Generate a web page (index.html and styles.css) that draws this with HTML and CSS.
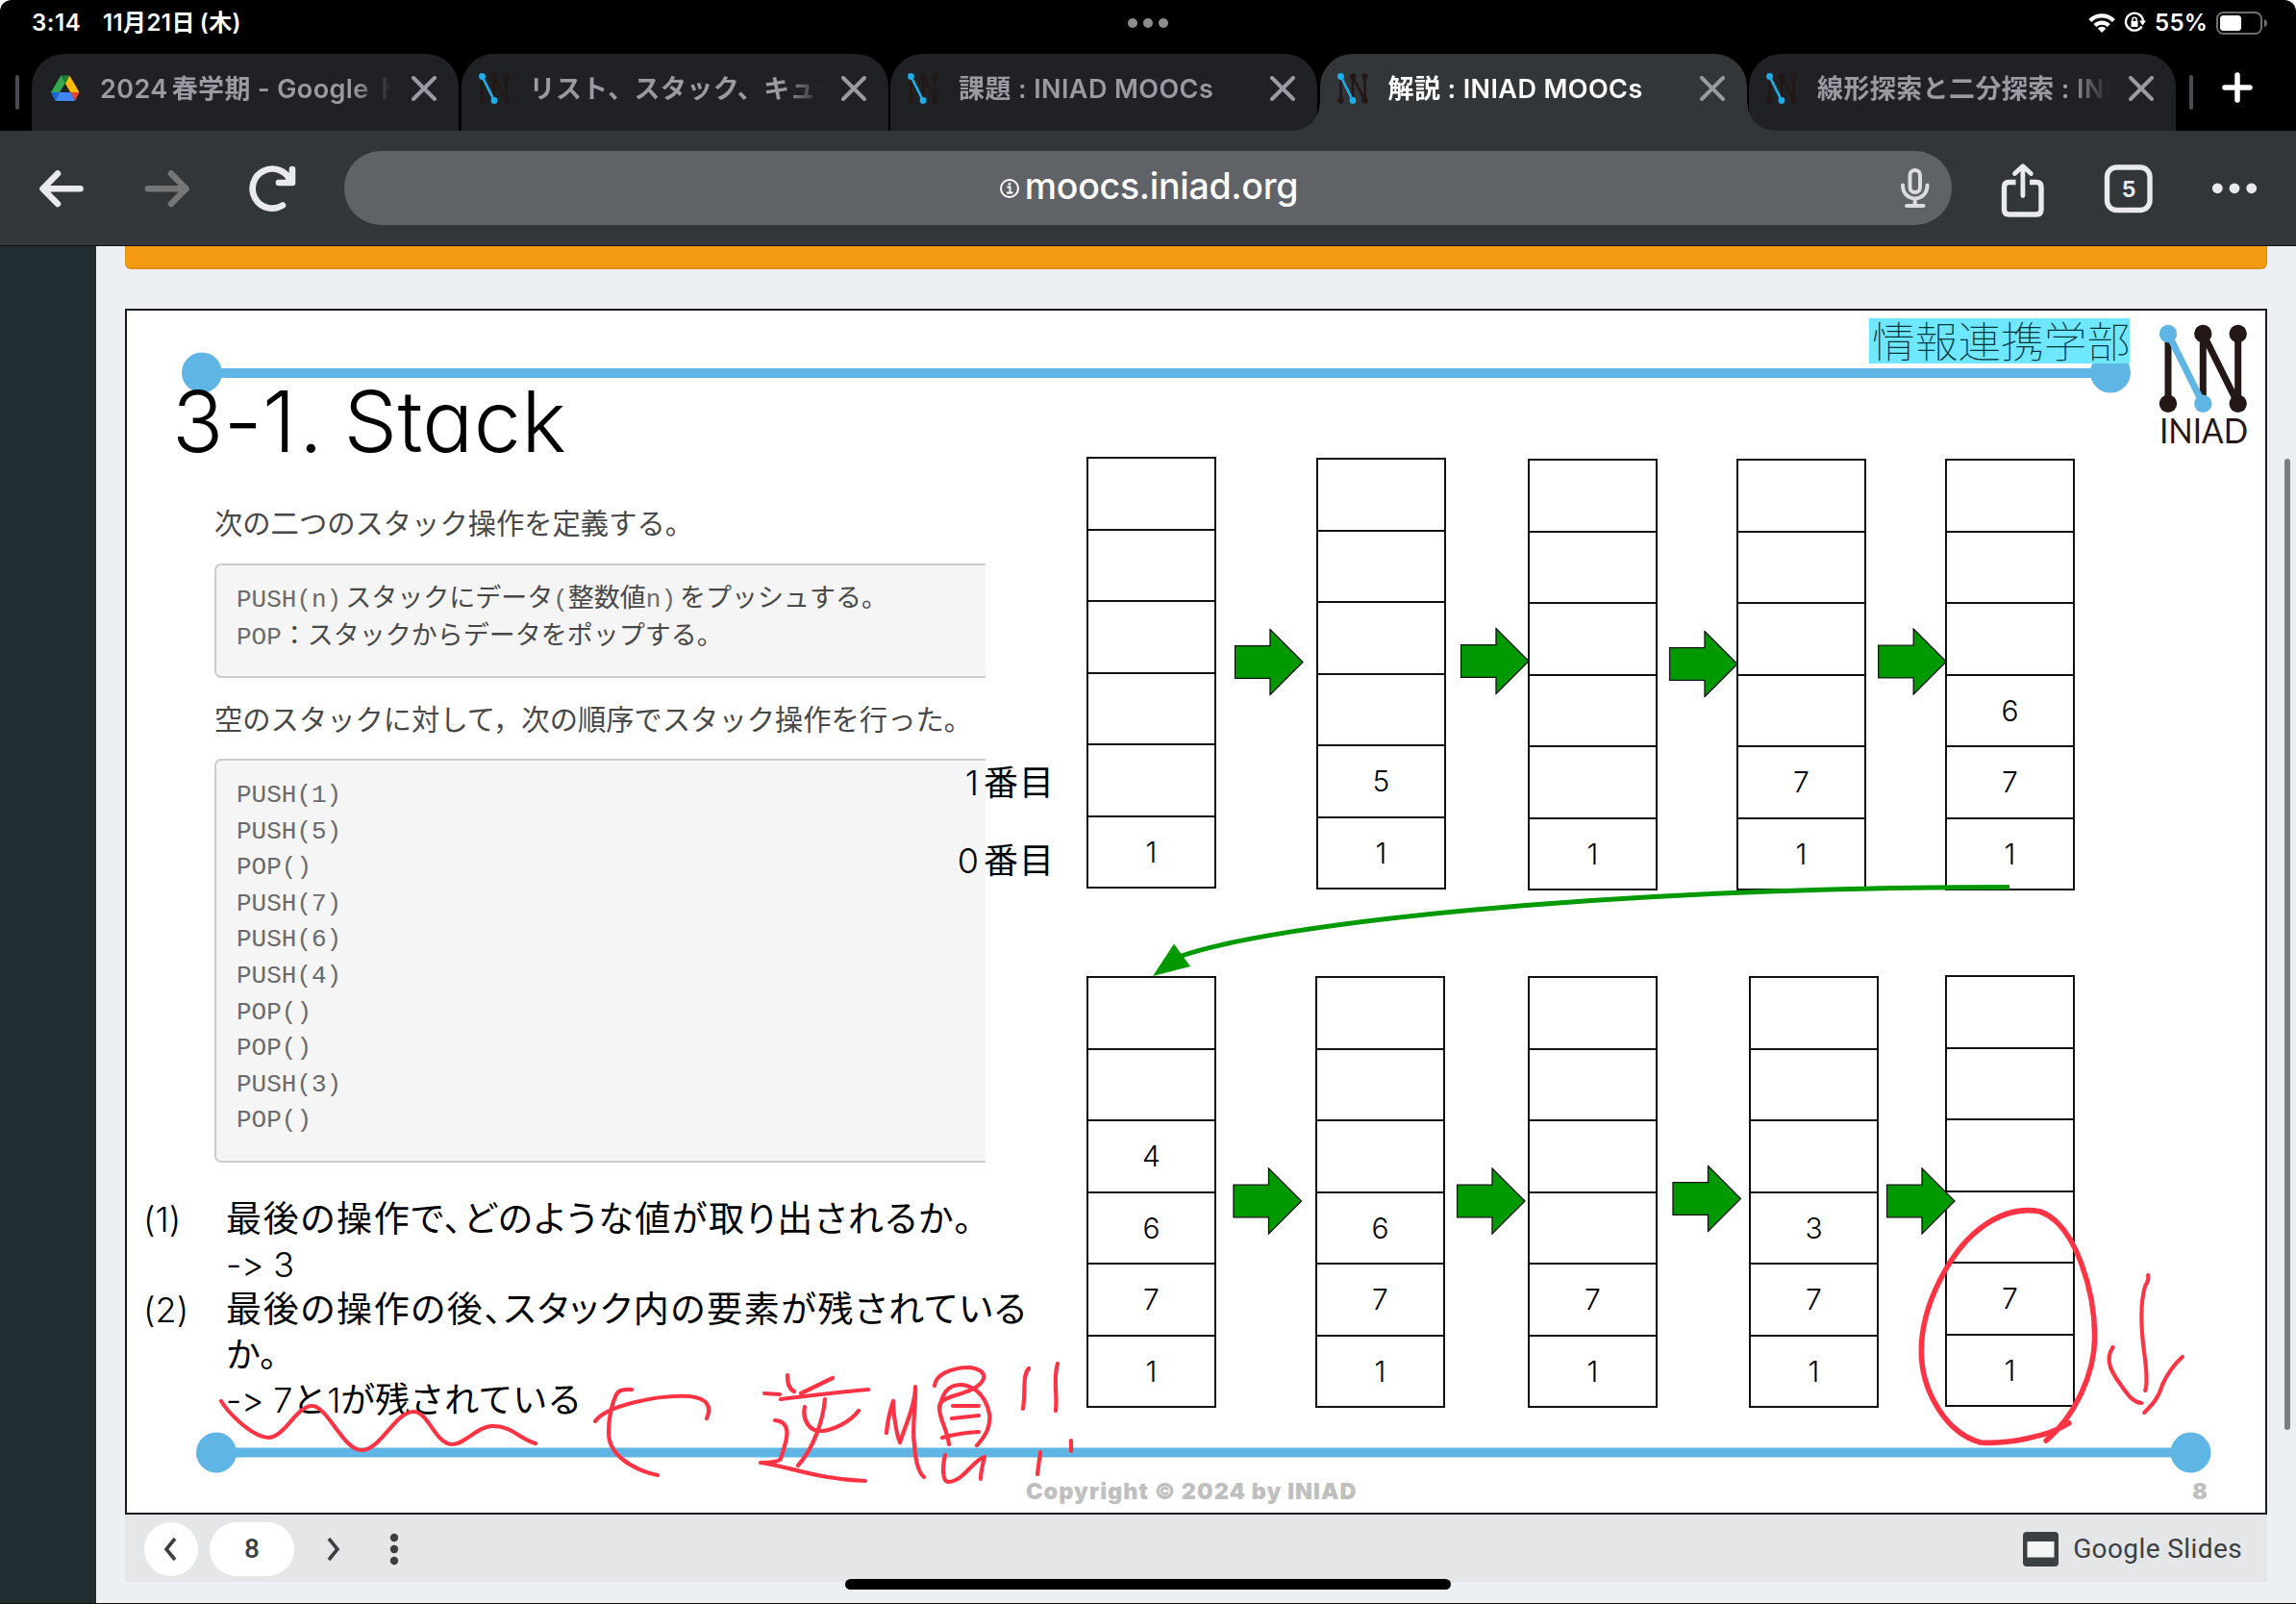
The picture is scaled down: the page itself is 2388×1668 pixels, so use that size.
FILE: index.html
```html
<!DOCTYPE html>
<html lang="ja">
<head>
<meta charset="utf-8">
<title>解説 : INIAD MOOCs</title>
<link rel="stylesheet" href="styles.css">
</head>
<body>
<svg class="defs" width="0" height="0">
  <symbol id="close" viewBox="0 0 26 26"><path d="M2 2L24 24M24 2L2 24" fill="none" stroke="currentColor" stroke-width="4" stroke-linecap="round"/></symbol>
  <symbol id="nn" viewBox="0 0 32 32">
    <g fill="none" stroke="#231815" stroke-width="2.6"><path d="M3.500 4V28M16 4V28M28.500 4V28M16 4L28.500 28"/></g>
    <g fill="#231815"><circle cx="3.500" cy="28.500" r="3.200"/><circle cx="16" cy="3.500" r="3.200"/><circle cx="28.500" cy="3.500" r="3.200"/><circle cx="28.500" cy="28.500" r="3.200"/></g>
    <path d="M3.500 3.500L16 28.500" stroke="#1eaee8" stroke-width="2.600"/><circle cx="3.500" cy="3.500" r="3.400" fill="#1eaee8"/><circle cx="16" cy="28.500" r="3.400" fill="#1eaee8"/>
  </symbol>
  <symbol id="block-arrow" viewBox="0 0 73 70"><path d="M1 18.200H37.500V1L71.500 35L37.500 69V51.800H1Z" fill="#009a00" stroke="#111" stroke-width="1.300"/></symbol>
</svg>

<div class="screen">
  <header class="status">
    <span class="time">3:14</span>
    <span class="date">11月21日<span class="weekday">(木)</span></span>
    <span class="multitask"><i></i><i></i><i></i></span>
    <span class="battery-pct">55%</span>
    <svg class="status-icons" viewBox="2170 8 64 32" width="64" height="32">
      <g fill="none" stroke="#fff" stroke-width="4.200"><path d="M2173.800 21.500A17.500 17.500 0 0 1 2198.400 21.500"/><path d="M2178.900 26.500A10.300 10.300 0 0 1 2193.300 26.500"/></g>
      <path d="M2186.100 34L2181.800 29.600A6.200 6.200 0 0 1 2190.400 29.600Z" fill="#fff"/>
      <path d="M2227.600 27.500A9 9 0 1 1 2229 22" fill="none" stroke="#fff" stroke-width="2.400"/>
      <path d="M2225 21.500H2232L2228.500 26.500Z" fill="#fff"/>
      <path d="M2216.500 22H2223.500V28H2216.500Z" fill="#fff"/><path d="M2217.800 22.500V20.500A2.200 2.200 0 0 1 2222.200 20.500V22.500" fill="none" stroke="#fff" stroke-width="1.500"/>
    </svg>
    <svg class="battery" viewBox="0 0 54 24" width="54" height="24">
      <rect x="1" y="1" width="46" height="22" rx="6.500" fill="none" stroke="#6f6f6f" stroke-width="2"/>
      <rect x="4" y="4" width="22" height="16" rx="3.500" fill="#fff"/>
      <path d="M50 8Q53 9 53 12T50 16Z" fill="#6f6f6f"/>
    </svg>
  </header>

  <nav class="tabs">
    <span class="sep"></span>
    <div class="tab first">
      <svg class="drive" viewBox="52 78 32 28" width="32" height="28">
        <path d="M52.900 96L63.200 78.700H72.500L62 96Z" fill="#34a853"/><path d="M63.200 78.700H72.500L67.900 87Z" fill="#188038"/>
        <path d="M67.900 87L72.500 78.700L82.500 96H73.300Z" fill="#fbbc04"/><path d="M73.300 96H82.500L78 105L73 96Z" fill="#ea4335"/>
        <path d="M52.900 96H61.800L57.500 105Z" fill="#1967d2"/><path d="M61.800 96H73.300L78 105H57.500Z" fill="#4285f4"/>
      </svg>
      <span class="tab-title t1">2024<span class="term">春学期</span> - Google ド</span>
      <svg class="x"><use href="#close"/></svg>
    </div>
    <div class="tab"><svg class="nn"><use href="#nn"/></svg><span class="tab-title">リスト、スタック、キュー</span><svg class="x"><use href="#close"/></svg></div>
    <div class="tab"><svg class="nn"><use href="#nn"/></svg><span class="tab-title">課題 : INIAD MOOCs</span><svg class="x"><use href="#close"/></svg></div>
    <div class="tab active"><svg class="nn"><use href="#nn"/></svg><span class="tab-title">解説 : INIAD MOOCs</span><svg class="x"><use href="#close"/></svg></div>
    <div class="tab"><svg class="nn"><use href="#nn"/></svg><span class="tab-title">線形探索と二分探索 : INIA</span><svg class="x"><use href="#close"/></svg></div>
    <span class="sep end"></span>
    <svg class="plus" viewBox="0 0 32 32" width="32" height="32"><path d="M16 3V29M3 16H29" stroke="#fff" stroke-width="5.500" stroke-linecap="round"/></svg>
  </nav>

  <div class="toolbar">
    <svg class="nav-icons" viewBox="30 166 290 60" width="290" height="60">
      <g fill="none" stroke-width="6.600" stroke-linecap="round" stroke-linejoin="round">
        <path d="M83.500 196.300H45M60 180.500L44.500 196.300L60 212" stroke="#e8eaed"/>
        <path d="M154 196.300H192.500M178 180.500L193.500 196.300L178 212" stroke="#757678"/>
        <path d="M294 213.500A20.500 20.500 0 1 1 302 188M304 176V190H290" stroke="#e8eaed"/>
      </g>
    </svg>
    <div class="omnibox">
      <svg class="info" viewBox="0 0 22 22" width="22" height="22"><circle cx="11" cy="11" r="9" fill="none" stroke="#fff" stroke-width="2"/><path d="M8.500 9.500H11.500V15.500M8 15.500H14.500" fill="none" stroke="#fff" stroke-width="1.800"/><circle cx="11" cy="6.300" r="1.400" fill="#fff"/></svg>
      <span class="url">moocs.iniad.org</span>
      <svg class="mic" viewBox="1974 172 36 48" width="36" height="48"><g fill="none" stroke="#dadce0" stroke-width="4" stroke-linecap="round"><rect x="1986.500" y="177" width="10.500" height="23" rx="5.250"/><path d="M1979 192.500C1979 211 2004.500 211 2004.500 192.500M1991.700 207V213M1983 214H2000.500"/></g></svg>
    </div>
    <svg class="actions" viewBox="2075 165 280 66" width="280" height="66">
      <g fill="none" stroke="#e8eaed" stroke-width="5.400" stroke-linecap="round" stroke-linejoin="round">
        <path d="M2096.500 189.500H2089.500Q2084.500 189.500 2084.500 194.500V218Q2084.500 223 2089.500 223H2118Q2123 223 2123 218V194.500Q2123 189.500 2118 189.500H2111" stroke-linecap="butt"/>
        <path d="M2103.900 203.500V175M2095.500 180.500L2103.900 172.700L2112.300 180.500" stroke-width="4.800"/>
        <rect x="2191.500" y="174" width="44.500" height="44.500" rx="10"/>
      </g>
      <g fill="#e8eaed"><circle cx="2306.300" cy="195.800" r="5.400"/><circle cx="2324" cy="195.800" r="5.400"/><circle cx="2341.700" cy="195.800" r="5.400"/></g>
      <text class="tab-count" x="2214" y="204.500" text-anchor="middle">5</text>
    </svg>
  </div>

  <div class="page">
    <aside class="sidebar"></aside>
    <main class="content">
      <div class="callout"></div>
      <section class="slide">
        <svg class="layer" viewBox="132 323 2224 1250">
          <g fill="#5fb6e4"><circle cx="210" cy="387.500" r="21"/><circle cx="2195" cy="387.500" r="21"/><rect x="210" y="383" width="1985" height="10"/>
          <circle cx="225" cy="1510.500" r="21"/><circle cx="2278.500" cy="1510.500" r="21"/><rect x="225" y="1505.500" width="2054" height="10"/></g>
          <g stroke="#231815" stroke-width="7"><path d="M2255 347V420M2291.300 347V420M2327.700 347V420M2291.300 347L2327.700 420"/></g>
          <g fill="#231815"><circle cx="2255" cy="419.700" r="9.200"/><circle cx="2291.300" cy="347" r="9.200"/><circle cx="2327.700" cy="347" r="9.200"/><circle cx="2327.700" cy="419.700" r="9.200"/></g>
          <path d="M2255 347L2291.300 420" stroke="#5fb6e4" stroke-width="7"/><circle cx="2255" cy="347" r="9.200" fill="#5fb6e4"/><circle cx="2291.300" cy="419.700" r="9.200" fill="#5fb6e4"/>
          <text class="logo-text" x="2246" y="460.500" textLength="92" lengthAdjust="spacingAndGlyphs">INIAD</text>
        </svg>
        <div class="faculty">情報連携学部</div>
        <h1>3-1<span class="dot">.</span> Stack</h1>

        <div class="problem">
          <p class="lead">次の二つのスタック操作を定義する。</p>
          <pre class="code spec"><span>PUSH(n)<b>スタックにデータ</b>(<b class="tight">整数値</b>n)<b>をプッシュする。</b></span>
<span>POP<b class="tight">：スタックからデータをポップする。</b></span></pre>
          <p class="lead second">空のスタックに対して，次の順序でスタック操作を行った。</p>
          <pre class="code ops">PUSH(1)
PUSH(5)
POP()
PUSH(7)
PUSH(6)
PUSH(4)
POP()
POP()
PUSH(3)
POP()</pre>
        </div>
        <div class="index one"><span>1</span>番目</div>
        <div class="index zero"><span>0</span>番目</div>

        <ol class="answers">
          <li><span class="no">(1)</span><div><p class="q1">最後の操作で、どのような値が取り出されるか。</p><p><span class="lt">-&gt; 3</span></p></div></li>
          <li><span class="no">(2)</span><div><p class="q2">最後の操作の後、スタック内の要素が残されている</p><p>か。</p><p><span class="lt">-&gt; 7</span>と<span class="lt">1</span>が残されている</p></div></li>
        </ol>

        <div class="stack a1"><i></i><i></i><i></i><i></i><i></i><i>1</i></div>
        <div class="stack a2"><i></i><i></i><i></i><i></i><i>5</i><i>1</i></div>
        <div class="stack a3"><i></i><i></i><i></i><i></i><i></i><i>1</i></div>
        <div class="stack a4"><i></i><i></i><i></i><i></i><i>7</i><i>1</i></div>
        <div class="stack a5"><i></i><i></i><i></i><i>6</i><i>7</i><i>1</i></div>
        <div class="stack b1"><i></i><i></i><i>4</i><i>6</i><i>7</i><i>1</i></div>
        <div class="stack b2"><i></i><i></i><i></i><i>6</i><i>7</i><i>1</i></div>
        <div class="stack b3"><i></i><i></i><i></i><i></i><i>7</i><i>1</i></div>
        <div class="stack b4"><i></i><i></i><i></i><i>3</i><i>7</i><i>1</i></div>
        <div class="stack b5"><i></i><i></i><i></i><i></i><i>7</i><i>1</i></div>

        <div class="copyright">Copyright © 2024 by INIAD</div>
        <div class="page-no">8</div>

        <svg class="layer" viewBox="132 323 2224 1250">
          <use href="#block-arrow" x="1283.500" y="653.500" width="73" height="70"/>
          <use href="#block-arrow" x="1518.500" y="652.500" width="73" height="70"/>
          <use href="#block-arrow" x="1735.500" y="655.500" width="73" height="70"/>
          <use href="#block-arrow" x="1952.700" y="653" width="73" height="70"/>
          <use href="#block-arrow" x="1282" y="1214" width="73" height="70"/>
          <use href="#block-arrow" x="1514.500" y="1214" width="73" height="70"/>
          <use href="#block-arrow" x="1739" y="1211.500" width="73" height="70"/>
          <use href="#block-arrow" x="1961.500" y="1214" width="73" height="70"/>
          <path d="M2090 922.600C1650 923 1320 962 1229 994" fill="none" stroke="#009a00" stroke-width="5"/>
          <path d="M1199 1015L1221 981.500L1238 1005Z" fill="#009a00"/>
          <g class="ink">
            <path d="M230 1457C238 1470 262 1494 279 1495C296 1495 309 1461 325 1462C341 1463 357 1508 376 1508C396 1508 411 1468 430 1468C446 1468 452 1501 470 1502C484 1502 497 1482 514 1483C532 1483 540 1496 557 1501"/>
            <path d="M657 1445Q644 1444 641 1450C635 1463 633 1474 633 1490C633 1512 656 1528 684 1534"/>
            <path d="M619 1478C630 1462 684 1450 717 1452C737 1454 740 1464 735 1475"/>
            <path d="M819 1430C819 1438 820 1444 826 1447M866 1433L833 1449M795 1449L811 1450M812 1455C845 1451 870 1448 903 1445M858 1455C856 1478 846 1506 830 1524M837 1463C834 1476 842 1489 854 1488C866 1488 885 1478 893 1467M806 1477C828 1479 815 1505 812 1517Q809 1521 791 1521C822 1525 848 1538 900 1540"/>
            <path d="M922 1490C923 1478 926 1466 929 1457C929 1468 932 1491 936 1500C942 1482 952 1460 952 1442C953 1462 948 1485 951 1502C952 1518 955 1531 961 1536"/>
            <path d="M972 1441C973 1430 988 1422 1009 1422C1034 1426 1023 1443 1000 1449C983 1454 976 1457 977 1465C978 1478 985 1486 987 1502M977 1465C981 1442 991 1440 1001 1440C1018 1443 1026 1456 1029 1470C1031 1485 1024 1495 1016 1503M991 1462H1018M990 1475L1018 1472M980 1495Q998 1490 1018 1489M983 1513C980 1526 980 1540 986 1541C1002 1541 1012 1518 1024 1515C1022 1524 1020 1530 1020 1538"/>
            <path d="M1070 1423C1063 1431 1067 1446 1064 1465M1100 1418C1095 1435 1100 1448 1098 1467M1082 1510L1079 1533M1114 1498V1509"/>
            <g transform="translate(15.100 0) scale(.9911 1)">
              <path class="ring" d="M2156 1480C2134 1494 2090 1502 2063 1500C2026 1490 2001 1445 2001 1405C2001 1356 2032 1301 2062 1278C2088 1258 2111 1257 2126 1260C2164 1274 2183 1345 2183 1390C2183 1430 2161 1474 2132 1498"/>
              <path d="M2239 1326Q2240 1332 2236 1337C2230 1357 2232 1385 2235 1407C2238 1429 2238 1440 2236 1446M2202 1401C2192 1416 2203 1430 2211 1441C2218 1451 2223 1458 2232 1459M2275 1411C2266 1419 2260 1427 2254 1440C2250 1454 2243 1461 2235 1469"/>
            </g>
          </g>
        </svg>
      </section>
      <footer class="player">
        <span class="btn"><svg viewBox="0 0 24 28" width="24" height="28"><path d="M16 3L7 14L16 25" class="chev"/></svg></span>
        <span class="pill">8</span>
        <svg class="next" viewBox="0 0 24 28" width="24" height="28"><path d="M8 3L17 14L8 25" class="chev"/></svg>
        <svg class="more" viewBox="0 0 10 36" width="10" height="36"><g fill="#3c4043"><circle cx="5" cy="6" r="4.200"/><circle cx="5" cy="18" r="4.200"/><circle cx="5" cy="30" r="4.200"/></g></svg>
        <svg class="slides-icon" viewBox="0 0 37 36" width="37" height="36"><rect width="37" height="36" rx="4" fill="#3c4043"/><rect x="4.500" y="10" width="28" height="16.500" fill="#f4f5f6"/></svg>
        <span class="brand">Google Slides</span>
      </footer>
    </main>
    <div class="scrollbar"></div>
  </div>
  <div class="home"></div>
</div>
</body>
</html>
```
FILE: styles.css
```css
* { box-sizing: border-box; }
body { margin: 0; background: #fff; font-family: Inter, "Noto Sans CJK JP", sans-serif; }
p, h1, pre, ol { margin: 0; padding: 0; }
i { font-style: normal; }
.defs { position: absolute; }
.screen { position: relative; width: 2388px; height: 1668px; overflow: hidden; border-radius: 12px 12px 0 0; background: #000; display: flex; flex-direction: column; }

/* status bar */
.status { position: relative; height: 56px; display: flex; align-items: flex-start; padding: 9px 32px 0 33px; color: #fff; font-size: 24px; font-weight: 600; line-height: 30px; }
.time { width: 74px; letter-spacing: .6px; }
.date { letter-spacing: .4px; white-space: nowrap; }
.weekday { margin-left: 5px; }
.multitask { position: absolute; left: 1173px; top: 19px; display: flex; gap: 6px; }
.multitask i { width: 10px; height: 10px; border-radius: 50%; background: #8c8c8c; }
.status-icons { order: 1; margin-left: auto; margin-top: -1px; }
.battery-pct { order: 2; margin-left: 7px; width: 64px; white-space: nowrap; letter-spacing: .3px; }
.battery { order: 3; margin-top: 3px; margin-right: -3px; }

/* tab strip */
.tabs { height: 80px; display: flex; align-items: center; position: relative; }
.sep { width: 4px; height: 36px; border-radius: 2px; background: #4c4b54; margin-left: 16px; }
.sep.end { margin-left: 11px; }
.plus { margin-left: 30px; margin-top: -10px; }
.tab { position: relative; width: 444px; height: 80px; margin-right: 2.5px; flex: none; border-radius: 34px 34px 0 0; background: #202124; color: #9a9aa3; display: flex; align-items: center; padding: 0 23px 8px 18px; }
.tab.first { margin-left: 13px; }
.tab-title { width: 304px; margin-left: 21px; overflow: hidden; white-space: nowrap; font-size: 27px; font-weight: 600; line-height: 40px; letter-spacing: .4px; margin-top: 1px; -webkit-mask-image: linear-gradient(90deg, #000 87%, transparent 100%); mask-image: linear-gradient(90deg, #000 87%, transparent 100%); }
.tab-title.t1 { margin-left: 20px; }
.term { margin-left: 4px; }
.nn { width: 32px; height: 32px; flex: none; }
.drive { flex: none; margin-left: 1px; }
.x { width: 26px; height: 26px; margin-left: auto; flex: none; }
.tab.active { background: #323639; color: #fff; z-index: 1; }
.tab.active .x { color: #9a9aa3; }
.tab.active::before, .tab.active::after { content: ""; position: absolute; bottom: 0; width: 28px; height: 28px; }
.tab.active::before { left: -28px; background: radial-gradient(circle at 0 0, transparent 27px, #323639 28px); }
.tab.active::after { right: -28px; background: radial-gradient(circle at 100% 0, transparent 27px, #323639 28px); }

/* toolbar */
.toolbar { height: 120px; background: #323639; border-bottom: 1px solid #111; display: flex; align-items: center; flex: none; padding-left: 30px; }
.omnibox { position: relative; width: 1672px; height: 77px; border-radius: 38px; background: #5f6367; margin-left: 38px; display: flex; align-items: center; justify-content: center; }
.info { margin-right: 5px; margin-left: 1px; }
.url { color: #fff; font-size: 37.500px; font-weight: 500; line-height: 50px; margin-top: -4px; letter-spacing: -.3px; }
.mic { position: absolute; right: 20px; top: 15px; }
.actions { margin-left: 45px; margin-top: 4px; }
.tab-count { font: 700 23px Inter, sans-serif; fill: #e8eaed; }

/* page */
.page { position: relative; flex: 1; display: flex; background: #ecf0f5; border-bottom: 1px solid #111; }
.sidebar { width: 100px; background: #222d32; }
.content { width: 2228px; margin-left: 30px; display: flex; flex-direction: column; }
.callout { height: 24px; background: #f39c12; border: solid #e08e0b; border-width: 0 1px 2px; border-radius: 0 0 6px 6px; margin-bottom: 41px; flex: none; }
.scrollbar { position: absolute; right: 6px; top: 221px; width: 6px; height: 1010px; border-radius: 3px; background: #7c7e82; }
.home { position: absolute; left: 879px; top: 1642px; width: 630px; height: 11px; border-radius: 6px; background: #000; }

/* slide canvas */
.slide { position: relative; height: 1254px; flex: none; background: #fff; border: 2px solid #1c1c1e; color: #000; font-family: Inter, "Noto Sans CJK JP", sans-serif; font-feature-settings: "calt" 0, "cv11" 1; }
.layer { position: absolute; left: 0; top: 0; width: 2224px; height: 1250px; }
.logo-text { font: 400 36px Lato, sans-serif; fill: #231815; }
.faculty { position: absolute; left: 1812px; top: 8px; width: 271px; height: 47px; background: #6fe8ff; color: #06343c; padding-left: 3px; font: 100 44.700px/44px "Noto Sans CJK JP", sans-serif; white-space: nowrap; }
h1 { position: absolute; left: 47px; top: 60px; font-size: 88px; line-height: 110px; font-weight: 300; white-space: nowrap; letter-spacing: .4px; }
.dot { margin-left: 3px; margin-right: -4px; }
.problem { position: absolute; left: 91px; top: 198px; width: 802px; font-family: "Noto Sans CJK JP", sans-serif; color: #484848; }
.lead { font-size: 29.300px; line-height: 42px; white-space: nowrap; }
.second { margin-top: 20px; }
.code { margin-top: 22px; border: 2px solid #ccc; border-right: 0; border-radius: 7px 0 0 7px; background: #f5f5f5; padding-left: 21px; font: 26px/37.600px "Liberation Mono", monospace; color: #6a6a6a; }
.code b { font: 400 27px/30px "Noto Sans CJK JP", sans-serif; color: #484848; margin-left: 4px; }
.code b.tight { margin-left: 0; }
.spec { margin-top: 23px; height: 119px; padding-top: 17px; }
.ops { height: 420px; padding-top: 18px; }
.index { position: absolute; font-size: 36px; line-height: 50px; letter-spacing: 1px; white-space: nowrap; right: 1259px; font-weight: 400; }
.index span { font-weight: 300; letter-spacing: 0; margin-right: 5px; }
.one { top: 466px; }
.zero { top: 547px; }
.answers { position: absolute; left: 17px; top: 922px; list-style: none; font-size: 36px; line-height: 46.900px; font-weight: 400; }
.answers li { display: flex; }
.answers p { white-space: nowrap; height: 46.900px; }
.no { width: 86px; font-weight: 300; }
.lt { font-weight: 300; letter-spacing: -.2px; }
.answers .q1, .answers .q2 { font-feature-settings: "palt"; font-size: 37px; letter-spacing: 1.750px; }

.stack { position: absolute; width: 135px; height: 449px; border: solid #111; border-width: 0 2px 2px; display: grid; grid-template-rows: repeat(6, 1fr); font-size: 30px; font-weight: 300; }
.stack i { display: flex; align-items: center; justify-content: center; border-top: 2px solid #111; }
.a1 { left: 998px; top: 152px; }
.a2 { left: 1237px; top: 153px; }
.a3 { left: 1457px; top: 154px; }
.a4 { left: 1674px; top: 154px; }
.a5 { left: 1891px; top: 154px; }
.b1 { left: 998px; top: 692px; }
.b2 { left: 1236px; top: 692px; }
.b3 { left: 1457px; top: 692px; }
.b4 { left: 1687px; top: 692px; }
.b5 { left: 1891px; top: 691px; }
.copyright, .page-no { position: absolute; top: 1213px; font: 900 23.500px/30px Inter, sans-serif; color: #bfbfbf; white-space: nowrap; }
.copyright { left: 935px; letter-spacing: 1px; }
.page-no { left: 2148px; }
.ink { fill: none; stroke: #ff3344; stroke-width: 4.200; stroke-linecap: round; stroke-linejoin: round; }
.ink .ring { stroke-width: 5.600; }

/* player bar */
.player { height: 70px; flex: none; background: #e4e6e8; display: flex; align-items: center; padding: 1px 26px 0 20px; color: #3c4043; }
.chev { fill: none; stroke: #3c4043; stroke-width: 3.600; }
.btn { width: 56px; height: 56px; border-radius: 50%; background: #fff; display: flex; align-items: center; justify-content: center; }
.pill { width: 88px; height: 56px; border-radius: 28px; background: #fff; margin-left: 12px; display: flex; align-items: center; justify-content: center; font: 500 28px Roboto, sans-serif; }
.next { margin-left: 28px; }
.more { margin-left: 47px; }
.slides-icon { margin-left: auto; }
.brand { margin-left: 15px; font: 400 28px Roboto, sans-serif; letter-spacing: .4px; white-space: nowrap; }
```
